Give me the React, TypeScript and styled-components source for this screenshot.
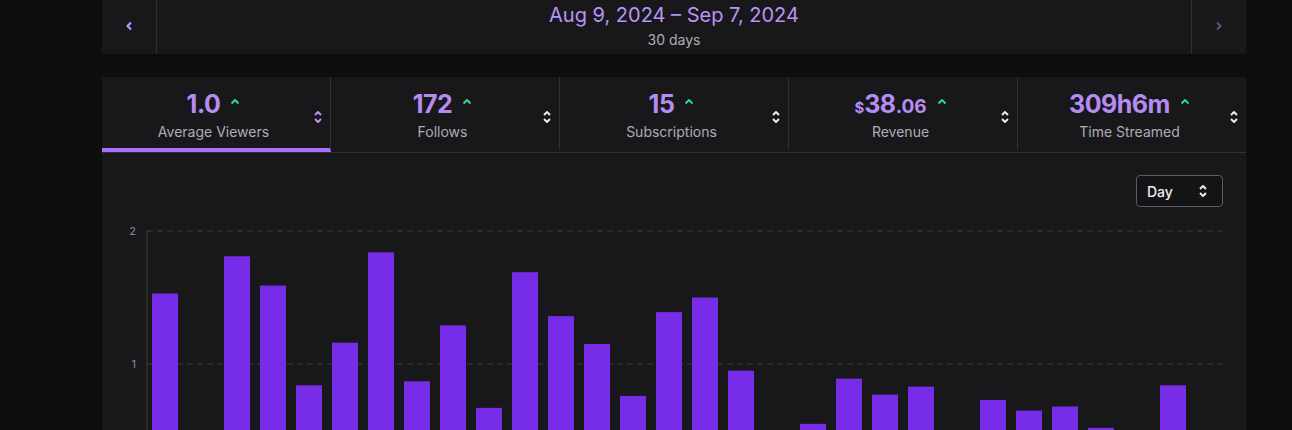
import React from 'react';
import styled, { createGlobalStyle } from 'styled-components';

const GlobalStyle = createGlobalStyle`
  body {
    margin: 0;
    background: #0e0e10;
    font-family: Inter, 'Noto Sans', sans-serif;
    color: #efeff1;
  }
`;

const values: (number | null)[] = [
  1.53, null, 1.81, 1.59, 0.84, 1.16, 1.84, 0.87, 1.29, 0.67, 1.69, 1.36, 1.15,
  0.76, 1.39, 1.5, 0.95, null, 0.55, 0.89, 0.77, 0.83, null, 0.73, 0.65, 0.68,
  0.52, null, 0.84, null,
];

const stats = [
  { value: '1.0', label: 'Average Viewers', active: true },
  { value: '172', label: 'Follows' },
  { value: '15', label: 'Subscriptions' },
  { value: '38', label: 'Revenue', money: true },
  { value: '309h6m', label: 'Time Streamed' },
];

const ChevronLeft: React.FC<{ color: string }> = ({ color }) => (
  <svg width="8" height="10" viewBox="0 0 8 10">
    <path d="M6 1.5 L2.5 5 L6 8.5" fill="none" stroke={color} strokeWidth="2.2" strokeLinejoin="round" />
  </svg>
);

const ChevronRight: React.FC<{ color: string }> = ({ color }) => (
  <svg width="8" height="10" viewBox="0 0 8 10">
    <path d="M2 1.5 L5.5 5 L2 8.5" fill="none" stroke={color} strokeWidth="2.2" strokeLinejoin="round" />
  </svg>
);

const UpArrow: React.FC = () => (
  <svg width="10" height="7" viewBox="0 0 10 7">
    <path d="M1.5 5.5 L5 2 L8.5 5.5" fill="none" stroke="#2fd69c" strokeWidth="2" strokeLinejoin="round" />
  </svg>
);

const SortIcon: React.FC<{ color: string }> = ({ color }) => (
  <svg width="10" height="14" viewBox="0 0 10 14">
    <path d="M2 5 L5 2 L8 5" fill="none" stroke={color} strokeWidth="1.9" strokeLinejoin="round" />
    <path d="M2 9 L5 12 L8 9" fill="none" stroke={color} strokeWidth="1.9" strokeLinejoin="round" />
  </svg>
);

const BarChart: React.FC = () => {
  const top = 16;
  const unit = 133;
  const zero = top + unit * 2;
  const axisX = 21;
  return (
    <svg width="1097" height="300" viewBox="0 0 1097 300">
      {[2, 1].map((v) => {
        const y = zero - v * unit;
        return (
          <g key={v}>
            <line x1={axisX} x2={1097} y1={y} y2={y} stroke="#3a3a3f" strokeDasharray="6 4" />
            <text x={10} y={y + 4} fill="#8a8a92" fontSize="11" textAnchor="end" fontFamily="Inter, sans-serif">
              {v}
            </text>
          </g>
        );
      })}
      <line x1={axisX} x2={axisX} y1={top - 1} y2={300} stroke="#3a3a3f" />
      {values.map((v, i) =>
        v === null ? null : (
          <rect key={i} x={26 + i * 36} y={zero - v * unit} width={26} height={v * unit} fill="#772ce8" />
        ),
      )}
    </svg>
  );
};

const App: React.FC = () => (
  <>
    <GlobalStyle />
    <Page>
      <DateBar>
        <NavButton side="left">
          <ChevronLeft color="#bf94ff" />
        </NavButton>
        <DateInfo>
          <DateRange>Aug 9, 2024 – Sep 7, 2024</DateRange>
          <DateDays>30 days</DateDays>
        </DateInfo>
        <NavButton side="right">
          <ChevronRight color="#5e4b8b" />
        </NavButton>
      </DateBar>

      <StatsPanel>
        <Tabs>
          {stats.map((s) => (
            <Tab key={s.label} active={!!s.active}>
              <TabBody>
                <ValueRow>
                  <Value>
                    {s.money ? (
                      <>
                        <Small size={15}>$</Small>
                        {s.value}
                        <Small size={19}>.06</Small>
                      </>
                    ) : (
                      s.value
                    )}
                  </Value>
                  <UpArrow />
                </ValueRow>
                <Label>{s.label}</Label>
              </TabBody>
              <SortSlot>
                <SortIcon color={s.active ? '#bf94ff' : '#efeff1'} />
              </SortSlot>
            </Tab>
          ))}
        </Tabs>
        <ChartArea>
          <ChartToolbar>
            <Select>
              <span>Day</span>
              <SortIcon color="#efeff1" />
            </Select>
          </ChartToolbar>
          <BarChart />
        </ChartArea>
      </StatsPanel>
    </Page>
  </>
);

const Page = styled.div`
  padding-left: 102px;
  width: 1144px;
  display: flex;
  flex-direction: column;
  gap: 22px;
`;

const DateBar = styled.div`
  display: flex;
  height: 55px;
  background: #18181b;
  border-bottom: 1px solid #0b0b0c;
  box-sizing: border-box;
`;

const NavButton = styled.div<{ side: 'left' | 'right' }>`
  width: 55px;
  display: flex;
  align-items: center;
  justify-content: center;
  padding-bottom: 2px;
  box-sizing: border-box;
  ${(p) => (p.side === 'left' ? 'border-right' : 'border-left')}: 1px solid #303036;
`;

const DateInfo = styled.div`
  flex: 1;
  display: flex;
  flex-direction: column;
  align-items: center;
  padding-top: 3px;
`;

const DateRange = styled.div`
  color: #b994f6;
  font-size: 20px;
  line-height: 24px;
`;

const DateDays = styled.div`
  color: #adadb8;
  font-size: 14px;
  line-height: 20px;
  margin-top: 3px;
`;

const StatsPanel = styled.div`
  background: #18181b;
  height: 360px;
`;

const Tabs = styled.div`
  display: flex;
  border-bottom: 1px solid #303036;
`;

const Tab = styled.div<{ active: boolean }>`
  flex: 1;
  height: 75px;
  box-sizing: border-box;
  display: flex;
  align-items: center;
  border-bottom: 4px solid ${(p) => (p.active ? '#a970ff' : 'transparent')};
  &:not(:last-child) {
    border-right: 1px solid #303036;
  }
`;

const TabBody = styled.div`
  flex: 1;
  display: flex;
  flex-direction: column;
  align-items: center;
  padding-left: 12px;
  padding-top: 6px;
`;

const ValueRow = styled.div`
  display: flex;
  align-items: center;
  gap: 10px;
  height: 30px;
  svg {
    margin-top: -6px;
  }
`;

const Value = styled.div`
  color: #b68cf4;
  font-size: 25px;
  font-weight: 700;
  line-height: 30px;
  height: 30px;
  letter-spacing: -0.5px;
`;

const Small = styled.span<{ size: number }>`
  font-size: ${(p) => p.size}px;
  line-height: 1;
  letter-spacing: 0;
`;

const Label = styled.div`
  color: #adadb8;
  font-size: 14px;
  line-height: 20px;
  margin-top: 3px;
`;

const SortSlot = styled.div`
  display: flex;
  align-items: center;
  padding-right: 7px;
  margin-top: 8px;
`;

const ChartArea = styled.div`
  padding: 22px 23px 0 24px;
`;

const ChartToolbar = styled.div`
  display: flex;
  justify-content: flex-end;
  margin-bottom: 8px;
`;

const Select = styled.div`
  width: 87px;
  height: 32px;
  box-sizing: border-box;
  border: 1px solid #5c5c63;
  border-radius: 4px;
  background: #141417;
  display: flex;
  align-items: center;
  justify-content: space-between;
  padding: 0 14px 0 10px;
  font-size: 14px;
  font-weight: 500;
  color: #efeff1;
`;

export default App;
